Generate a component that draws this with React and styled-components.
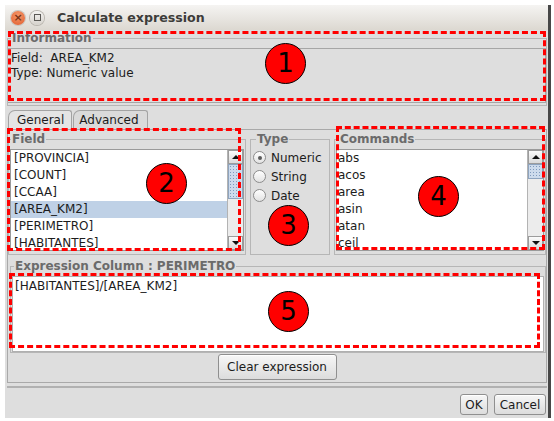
import React from 'react';
import styled, { createGlobalStyle } from 'styled-components';

const fields = ['[PROVINCIA]', '[COUNT]', '[CCAA]', '[AREA_KM2]', '[PERIMETRO]', '[HABITANTES]'];
const commands = ['abs', 'acos', 'area', 'asin', 'atan', 'ceil'];
const types = ['Numeric', 'String', 'Date'];

// annotation overlays, window coordinates
const boxes = [
  { l: 3, t: 26, w: 538, h: 70 },
  { l: 2, t: 123, w: 234, h: 123 },
  { l: 331, t: 121, w: 209, h: 124 },
  { l: 4, t: 268, w: 531, h: 75 },
];
const badges = [
  { n: 1, l: 260, t: 38 },
  { n: 2, l: 141, t: 158 },
  { n: 3, l: 263, t: 200 },
  { n: 4, l: 413, t: 171 },
  { n: 5, l: 263, t: 286 },
];

const App = () => {
  return (
    <Window>
      <GlobalStyle />
      <TitleBar>
        <CloseBtn>×</CloseBtn>
        <MinBtn><span /></MinBtn>
        <Title>Calculate expression</Title>
      </TitleBar>

      <Content>
        <InfoSet>
          <Legend $inset={3}>Information</Legend>
          <InfoPanel>
            <div>Field:&nbsp; AREA_KM2</div>
            <div>Type: Numeric value</div>
          </InfoPanel>
        </InfoSet>

        <Tabs>
          <Tab $active>General</Tab>
          <Tab>Advanced</Tab>
        </Tabs>

        <TabPane>
          <TopRow>
            <Group>
              <Legend $inset={1}>Field</Legend>
              <ListBox>
                <Rows>
                  {fields.map((f, i) => (
                    <Row key={f} $selected={i === 3}>{f}</Row>
                  ))}
                </Rows>
                <ScrollBar>
                  <ScrollButton><Arrow /></ScrollButton>
                  <Thumb $h={35} />
                  <Track />
                  <ScrollButton><Arrow $down /></ScrollButton>
                </ScrollBar>
              </ListBox>
            </Group>

            <Group $pad="2px 2px 3px 2px">
              <Legend $inset={3}>Type</Legend>
              {types.map((t, i) => (
                <RadioRow key={t}>
                  <Radio $checked={i === 0} />
                  {t}
                </RadioRow>
              ))}
            </Group>

            <Group>
              <Legend $inset={3}>Commands</Legend>
              <ListBox>
                <Rows>
                  {commands.map((c) => (
                    <Row key={c} $indent={1}>{c}</Row>
                  ))}
                </Rows>
                <ScrollBar>
                  <ScrollButton><Arrow /></ScrollButton>
                  <Thumb $h={15} />
                  <Track />
                  <ScrollButton><Arrow $down /></ScrollButton>
                </ScrollBar>
              </ListBox>
            </Group>
          </TopRow>

          <ExprSet>
            <Legend>Expression Column : PERIMETRO</Legend>
            <ExprArea>[HABITANTES]/[AREA_KM2]</ExprArea>
          </ExprSet>

          <ButtonRow>
            <Button $w={119} $h={26}>Clear expression</Button>
          </ButtonRow>
        </TabPane>

        <BottomBar>
          <Button $w={28} $h={21}>OK</Button>
          <Button $w={52} $h={21}>Cancel</Button>
        </BottomBar>
      </Content>

      {boxes.map((b, i) => (
        <DashBox key={i} style={{ left: b.l, top: b.t, width: b.w, height: b.h }} />
      ))}
      {badges.map((b) => (
        <Badge key={b.n} style={{ left: b.l, top: b.t }}>{b.n}</Badge>
      ))}
    </Window>
  );
};

export default App;

const GlobalStyle = createGlobalStyle`
  html, body {
    margin: 0;
    padding: 0;
    background: #ffffff;
  }
  body {
    font-family: "DejaVu Sans", "Liberation Sans", sans-serif;
    font-size: 12px;
    color: #1c1c1c;
  }
`;

const Window = styled.div`
  position: relative;
  margin: 5px 0 0 5px;
  width: 543px;
  height: 413px;
  border-right: 3px solid #474747;
  background: #dedede;
  display: flex;
  flex-direction: column;
`;

const TitleBar = styled.div`
  height: 25px;
  display: flex;
  align-items: center;
  padding-left: 6px;
  background: linear-gradient(#f5f4f2, #dcd8d1);
  box-sizing: border-box;
`;

const CloseBtn = styled.div`
  width: 14px;
  height: 14px;
  border-radius: 50%;
  background: radial-gradient(circle at 50% 35%, #f59a6c, #e05a2b);
  box-shadow: 0 0 0 1px #c8c4be;
  color: #7a3416;
  font-size: 11px;
  line-height: 14px;
  text-align: center;
  font-weight: bold;
`;

const MinBtn = styled.div`
  width: 14px;
  height: 14px;
  margin-left: 5px;
  border-radius: 50%;
  background: linear-gradient(#f4f3f1, #d6d2cc);
  box-shadow: 0 0 0 1px #b9b5ae;
  display: flex;
  align-items: center;
  justify-content: center;

  span {
    width: 5px;
    height: 5px;
    border: 1px solid #5b5955;
  }
`;

const Title = styled.div`
  margin-left: 13px;
  font-weight: bold;
  font-size: 12.6px;
  color: #3d3c3a;
`;

const Content = styled.div`
  flex: 1;
  display: flex;
  flex-direction: column;
  padding: 0 1px 0 2px;
`;

const Legend = styled.legend`
  font-weight: bold;
  font-size: 12px;
  line-height: 14px;
  color: #6b6b6b;
  padding: 0 1px;
  margin-left: ${(p) => p.$inset ?? 2}px;
`;

const InfoSet = styled.fieldset`
  margin: 1px 0 0 0;
  padding: 3px 0 2px 0;
  min-width: 0;
  border: 1px solid #b6b6b6;
`;

const InfoPanel = styled.div`
  height: 51px;
  border: 1px solid #a6a6a6;
  border-left: none;
  padding: 2px 0 0 3px;
  line-height: 15px;
`;

const Tabs = styled.div`
  display: flex;
  margin-top: 4px;
  padding-left: 1px;
  height: 19px;
`;

const Tab = styled.div`
  height: 19px;
  box-sizing: border-box;
  padding: 2px ${(p) => (p.$active ? '7px 0 8px' : '8px 0 5px')};
  border: 1px solid #a3a3a3;
  border-bottom: none;
  border-radius: 7px 3px 0 0;
  background: ${(p) => (p.$active ? '#e4e4e4' : '#dadada')};
  line-height: 15px;
  margin-right: 1px;
`;

const TabPane = styled.div`
  height: 254px;
  box-sizing: border-box;
  border: 1px solid #a9a9a9;
  display: flex;
  flex-direction: column;
`;

const TopRow = styled.div`
  margin-top: 2px;
  display: grid;
  grid-template-columns: 238px 80px 1fr;
  column-gap: 4px;
`;

const Group = styled.fieldset`
  margin: 0;
  min-width: 0;
  padding: ${(p) => p.$pad || '3px 1px 3px 1px'};
  border: 1px solid #b6b6b6;
`;

const ListBox = styled.div`
  height: 102px;
  box-sizing: border-box;
  border: 1px solid #9a9a9a;
  background: #ffffff;
  display: flex;
  overflow: hidden;
`;

const Rows = styled.div`
  flex: 1;
  display: flex;
  flex-direction: column;
`;

const Row = styled.div`
  flex: none;
  height: 17px;
  line-height: 17px;
  padding-left: ${(p) => p.$indent ?? 3}px;
  background: ${(p) => (p.$selected ? '#bfd1e6' : 'transparent')};
  white-space: nowrap;
`;

const ScrollBar = styled.div`
  width: 15px;
  flex: none;
  display: flex;
  flex-direction: column;
  background: #ececec;
  border-left: 1px solid #b3b3b3;
`;

const ScrollButton = styled.div`
  height: 14px;
  box-sizing: border-box;
  border: 1px solid #9c9c9c;
  background: linear-gradient(#fbfbfb, #dadada);
  display: flex;
  align-items: center;
  justify-content: center;
`;

const Arrow = styled.div`
  width: 0;
  height: 0;
  border-left: 4px solid transparent;
  border-right: 4px solid transparent;
  ${(p) => (p.$down ? 'border-top: 4px solid #111;' : 'border-bottom: 4px solid #111;')}
`;

const Thumb = styled.div`
  height: ${(p) => p.$h}px;
  box-sizing: border-box;
  border: 1px solid #8ea4bf;
  background-color: #cddbec;
  background-image: radial-gradient(circle, #7f9abd 0.7px, transparent 1px);
  background-size: 3px 3px;
`;

const Track = styled.div`
  flex: 1;
`;

const RadioRow = styled.div`
  height: 19px;
  display: flex;
  align-items: center;
  gap: 5px;
`;

const Radio = styled.div`
  width: 13px;
  height: 13px;
  box-sizing: border-box;
  border-radius: 50%;
  border: 1px solid #8c8c8c;
  background: linear-gradient(#ffffff, #e2e2e2);
  display: flex;
  align-items: center;
  justify-content: center;

  &::after {
    content: '';
    width: 4px;
    height: 4px;
    border-radius: 50%;
    background: ${(p) => (p.$checked ? '#5a5a5a' : 'transparent')};
  }
`;

const ExprSet = styled.fieldset`
  margin: 4px 0 0 2px;
  min-width: 0;
  padding: 3px 1px 0 1px;
  border: 1px solid #b6b6b6;
`;

const ExprArea = styled.div`
  height: 76px;
  box-sizing: border-box;
  border: 1px solid #b0b0b0;
  background: #ffffff;
  padding: 2px 0 0 2px;
  line-height: 15px;
`;

const ButtonRow = styled.div`
  margin-top: 1px;
  display: flex;
  justify-content: center;
`;

const Button = styled.button`
  width: ${(p) => p.$w}px;
  height: ${(p) => p.$h}px;
  padding: 0;
  border: 1px solid #8f8f8f;
  border-radius: 3px;
  background: linear-gradient(#f7f7f7, #dcdcdc);
  box-shadow: inset 0 1px 0 #ffffff;
  font-family: "DejaVu Sans", "Liberation Sans", sans-serif;
  font-size: 12px;
  color: #1c1c1c;
`;

const BottomBar = styled.div`
  margin-top: 3px;
  border-top: 2px solid #b1b1b1;
  padding: 6px 1px 0 0;
  display: flex;
  justify-content: flex-end;
  gap: 6px;
`;

const DashBox = styled.div`
  position: absolute;
  box-sizing: border-box;
  border: 3px dashed #ff0000;
  pointer-events: none;
`;

const Badge = styled.div`
  position: absolute;
  width: 41px;
  height: 41px;
  box-sizing: border-box;
  border-radius: 50%;
  border: 1px solid #000000;
  background: #ff0000;
  color: #000000;
  font-family: "DejaVu Sans", sans-serif;
  font-size: 26px;
  line-height: 39px;
  text-align: center;
`;
